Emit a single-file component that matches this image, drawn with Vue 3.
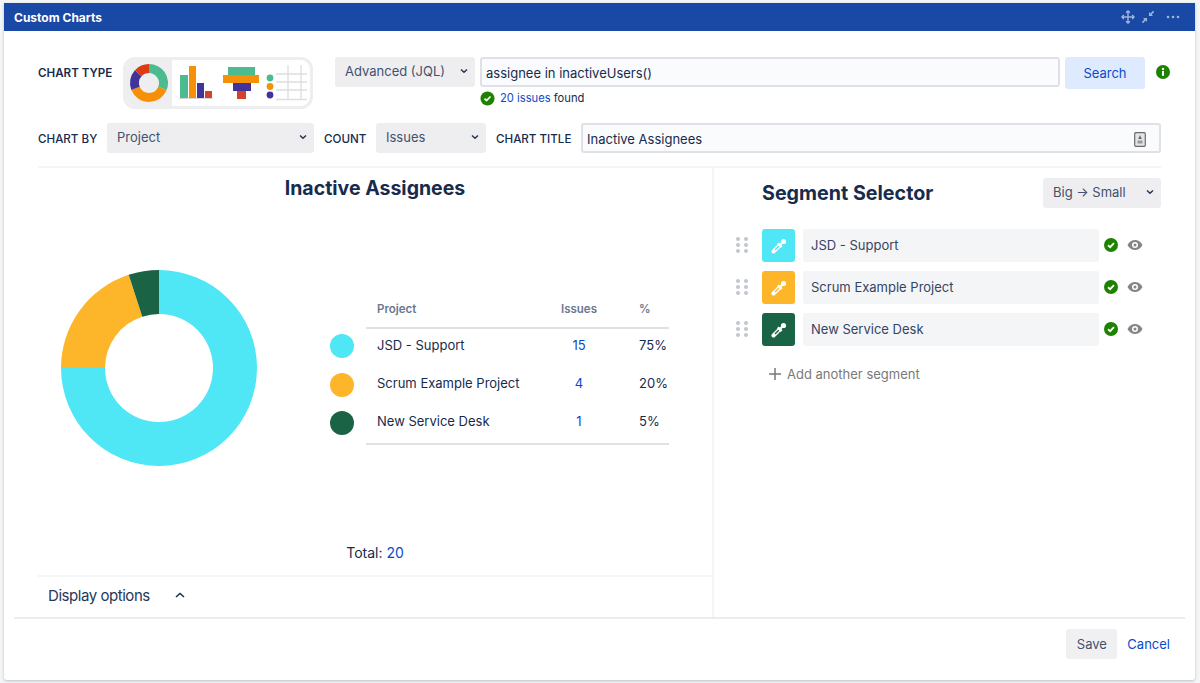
<script setup>
const chartTypes = [
  { id: 'donut', box: '126 60 46 46', active: true },
  { id: 'bars', box: '172 60 46 46' },
  { id: 'funnel', box: '218 60 46 46' },
  { id: 'table', box: '264 60 46 46' }
]

const segments = [
  { name: 'JSD - Support', color: '#4fe6f5', issues: 15, pct: '75%' },
  { name: 'Scrum Example Project', color: '#fdb52a', issues: 4, pct: '20%' },
  { name: 'New Service Desk', color: '#1b6345', issues: 1, pct: '5%' }
]

// donut slices, clockwise from 12 o'clock
function slice(cx, cy, r, r2, from, to) {
  const pt = (rad, a) => {
    const t = ((a - 90) * Math.PI) / 180
    return `${(cx + rad * Math.cos(t)).toFixed(2)} ${(cy + rad * Math.sin(t)).toFixed(2)}`
  }
  const big = to - from > 180 ? 1 : 0
  return `M${pt(r, from)} A${r} ${r} 0 ${big} 1 ${pt(r, to)} L${pt(r2, to)} A${r2} ${r2} 0 ${big} 0 ${pt(r2, from)} Z`
}

const donut = []
let start = 0
for (const s of segments) {
  const end = start + (s.issues / 20) * 360
  donut.push({ color: s.color, d: slice(98, 98, 98, 54, start, end) })
  start = end
}

const miniDonut = [
  { color: '#4cbb8f', d: slice(149, 83, 19, 10, 0, 112) },
  { color: '#f79009', d: slice(149, 83, 19, 10, 112, 248) },
  { color: '#41339a', d: slice(149, 83, 19, 10, 248, 312) },
  { color: '#dc3a14', d: slice(149, 83, 19, 10, 312, 360) }
]
</script>

<template>
  <div class="page">
    <div class="card">
      <div class="titlebar">
        <span class="titlebar-name">Custom Charts</span>
        <div class="titlebar-icons">
          <svg width="14" height="14" viewBox="0 0 16 16" fill="none" stroke="#9fb3dc" stroke-width="1.600">
            <path d="M8 1v14M1 8h14M5.800 3.200 8 1l2.200 2.200M5.800 12.800 8 15l2.200-2.200M3.200 5.800 1 8l2.200 2.200M12.800 5.800 15 8l-2.200 2.200" />
          </svg>
          <svg width="14" height="14" viewBox="0 0 14 14" fill="#9fb3dc">
            <path d="M8 6V2l1.400 1.400L12 .8l1.200 1.200-2.600 2.600L12 6zM6 8v4l-1.400-1.400L2 13.200.8 12l2.600-2.600L2 8z" />
          </svg>
          <svg class="dots" width="14" height="4" viewBox="0 0 14 4" fill="#9fb3dc">
            <circle cx="2" cy="2" r="1.300" />
            <circle cx="7" cy="2" r="1.300" />
            <circle cx="12" cy="2" r="1.300" />
          </svg>
        </div>
      </div>

      <div class="controls">
        <div class="row row-top">
          <span class="label label-type">CHART TYPE</span>
          <div class="type-picker">
            <svg
              v-for="t in chartTypes"
              :key="t.id"
              :class="['type-btn', { active: t.active }]"
              width="46"
              height="46"
              :viewBox="t.box"
            >
              <template v-if="t.id === 'donut'">
                <path v-for="p in miniDonut" :key="p.color" :d="p.d" :fill="p.color" />
              </template>
              <template v-else-if="t.id === 'bars'">
                <rect x="180" y="75" width="8" height="23" fill="#4cbb8f" />
                <rect x="189" y="66" width="7" height="32" fill="#f79009" />
                <rect x="197" y="83" width="7" height="15" fill="#41339a" />
                <rect x="205" y="91" width="7" height="7" fill="#d1442a" />
                <rect x="179" y="98" width="34" height="1" fill="#d5d5da" />
              </template>
              <template v-else-if="t.id === 'funnel'">
                <rect x="228" y="67" width="27" height="8" fill="#4cbb8f" />
                <rect x="223" y="75" width="36" height="8" fill="#f79009" />
                <rect x="233" y="83" width="18" height="8" fill="#41339a" />
                <rect x="237" y="91" width="9" height="8" fill="#d1442a" />
              </template>
              <template v-else>
                <path d="M276 74h31M276 82h31M276 90h31M276 99.500h31M288 65v35M301 65v35" stroke="#dedede" stroke-width="1.300" fill="none" />
                <circle cx="270" cy="78" r="3.400" fill="#4cbb8f" />
                <circle cx="270" cy="86.500" r="3.400" fill="#f79009" />
                <circle cx="270" cy="95" r="3.400" fill="#41339a" />
              </template>
            </svg>
          </div>
          <div class="select select-jql">
            <span>Advanced (JQL)</span>
            <svg class="chev" width="8" height="6" viewBox="0 0 8 6"><path d="M1 1.500 4 4.300 7 1.500" /></svg>
          </div>
          <div class="query">
            <div class="field field-query">assignee in inactiveUsers()</div>
            <div class="found">
              <svg width="15" height="15" viewBox="0 0 16 16">
                <circle cx="8" cy="8" r="7.500" fill="#1d8102" />
                <path d="M4.800 8.200 7 10.300l4.200-4.400" fill="none" stroke="#fff" stroke-width="1.800" />
              </svg>
              <span><a class="link">20 issues</a> found</span>
            </div>
          </div>
          <button class="btn-search">Search</button>
          <svg class="info" width="14" height="14" viewBox="0 0 14 14">
            <circle cx="7" cy="7" r="7" fill="#1d8102" />
            <rect x="6" y="6" width="2" height="4.800" fill="#fff" />
            <circle cx="7" cy="4" r="1.200" fill="#fff" />
          </svg>
        </div>

        <div class="row row-second">
          <span class="label label-by">CHART BY</span>
          <div class="select select-by">
            <span>Project</span>
            <svg class="chev" width="8" height="6" viewBox="0 0 8 6"><path d="M1 1.500 4 4.300 7 1.500" /></svg>
          </div>
          <span class="label label-count">COUNT</span>
          <div class="select select-count">
            <span>Issues</span>
            <svg class="chev" width="8" height="6" viewBox="0 0 8 6"><path d="M1 1.500 4 4.300 7 1.500" /></svg>
          </div>
          <span class="label label-title">CHART TITLE</span>
          <div class="field field-title">
            <span>Inactive Assignees</span>
            <svg width="12" height="15" viewBox="0 0 12 15">
              <rect x="0.700" y="0.700" width="10.600" height="13.600" rx="1" fill="#e4e4e4" stroke="#6b6b6b" stroke-width="1.200" />
              <path d="M6 3 7.800 7H4.200z" fill="#6b6b6b" />
              <rect x="3.500" y="8.500" width="5" height="3" fill="#9a9a9a" />
            </svg>
          </div>
        </div>
      </div>

      <div class="body">
        <section class="left">
          <h2 class="chart-title">Inactive Assignees</h2>
          <div class="chart">
            <svg class="pie" width="196" height="196" viewBox="0 0 196 196">
              <path v-for="p in donut" :key="p.color" :d="p.d" :fill="p.color" />
            </svg>
            <table class="legend">
              <thead>
                <tr>
                  <th class="col-dot"></th>
                  <th class="col-name">Project</th>
                  <th class="col-num">Issues</th>
                  <th class="col-pct">%</th>
                </tr>
              </thead>
              <tbody>
                <tr v-for="s in segments" :key="s.name">
                  <td class="col-dot"><span class="dot" :style="{ background: s.color }"></span></td>
                  <td class="col-name">{{ s.name }}</td>
                  <td class="col-num"><a class="link">{{ s.issues }}</a></td>
                  <td class="col-pct">{{ s.pct }}</td>
                </tr>
              </tbody>
            </table>
          </div>
          <div class="total">Total: <a class="link">20</a></div>
          <div class="display">
            <span>Display options</span>
            <svg width="10" height="6" viewBox="0 0 10 6" fill="none" stroke="#172b4d" stroke-width="1.500">
              <path d="M1 5 5 1.500 9 5" />
            </svg>
          </div>
        </section>

        <section class="right">
          <div class="right-head">
            <h2 class="right-title">Segment Selector</h2>
            <div class="select select-order">
              <span>Big → Small</span>
              <svg class="chev" width="8" height="6" viewBox="0 0 8 6"><path d="M1 1.500 4 4.300 7 1.500" /></svg>
            </div>
          </div>
          <div class="seg-list">
            <div v-for="s in segments" :key="s.name" class="seg">
              <svg class="grip" width="12" height="16" viewBox="0 0 12 16" fill="#c1c7d0">
                <circle cx="2" cy="2" r="2" />
                <circle cx="10" cy="2" r="2" />
                <circle cx="2" cy="8" r="2" />
                <circle cx="10" cy="8" r="2" />
                <circle cx="2" cy="14" r="2" />
                <circle cx="10" cy="14" r="2" />
              </svg>
              <div class="swatch" :style="{ background: s.color, color: s.color }">
                <svg width="16" height="16" viewBox="0 0 16 16">
                  <path d="M2.500 13.500 8.500 7.500" stroke="#fff" stroke-width="4" stroke-linecap="round" />
                  <path d="M4 12 8 8" stroke="currentColor" stroke-width="1.500" />
                  <path d="M6.800 5.400 10.600 9.200M9.500 6.500l3-3" stroke="#fff" stroke-width="2.400" />
                  <circle cx="12.500" cy="3.500" r="2.600" fill="#fff" />
                </svg>
              </div>
              <div class="seg-name">{{ s.name }}</div>
              <svg class="seg-check" width="14" height="14" viewBox="0 0 16 16">
                <circle cx="8" cy="8" r="8" fill="#1d8102" />
                <path d="M4.600 8.300 7 10.500l4.400-4.600" fill="none" stroke="#fff" stroke-width="2" />
              </svg>
              <svg class="seg-eye" width="16" height="12" viewBox="0 0 16 12">
                <path d="M0.500 6C2.300 2.500 5 1 8 1s5.700 1.500 7.500 5c-1.800 3.500-4.500 5-7.500 5S2.300 9.500.5 6z" fill="#858585" />
                <circle cx="8" cy="6" r="3" fill="#fff" />
                <circle cx="8" cy="6" r="1.500" fill="#858585" />
              </svg>
            </div>
          </div>
          <div class="add-seg">
            <svg width="12" height="12" viewBox="0 0 12 12" stroke="#7a7a7a" stroke-width="1.500"><path d="M6 0v12M0 6h12" /></svg>
            <span>Add another segment</span>
          </div>
        </section>
      </div>

      <div class="footer">
        <button class="btn-save">Save</button>
        <a class="link cancel">Cancel</a>
      </div>
    </div>
  </div>
</template>

<style>
html,
body {
  margin: 0;
  background: #f4f5f7;
}
</style>

<style scoped>
.page {
  height: 683px;
  box-sizing: border-box;
  padding: 3px 5px 3px 4px;
  font-family: Inter, "Liberation Sans", sans-serif;
  font-size: 13px;
  color: #172b4d;
}

.card {
  height: 677px;
  background: #fff;
  border-radius: 0 0 3px 3px;
  box-shadow: 0 1px 3px rgba(9, 30, 66, 0.25);
  display: flex;
  flex-direction: column;
  overflow: hidden;
}

.titlebar {
  height: 28px;
  flex: none;
  background: #1a48a5;
  display: flex;
  align-items: center;
  justify-content: space-between;
  padding: 0 15px 0 10px;
}

.titlebar-name {
  color: #fff;
  font-size: 12px;
  font-weight: 700;
}

.titlebar-icons {
  display: flex;
  align-items: center;
  gap: 6px;
}

.dots {
  margin-left: 5px;
}

.controls {
  padding: 26px 34px 0;
}

.row {
  display: flex;
}

.row-top {
  align-items: flex-start;
  height: 52px;
}

.row-second {
  align-items: center;
  height: 30px;
  margin-top: 14px;
}

.label {
  flex: none;
  font-size: 11.600px;
  font-weight: 500;
  white-space: nowrap;
}

.row-second .label {
  margin-top: 2px;
}

.label-type {
  font-weight: 600;
  width: 85px;
  margin-top: 9px;
}

.label-by {
  width: 59px;
}

.label-count {
  width: 42px;
  margin-left: 10px;
}

.label-title {
  width: 75px;
  margin-left: 10px;
}

.type-picker {
  width: 190px;
  height: 52px;
  box-sizing: border-box;
  flex: none;
  display: flex;
  border: 3px solid #eeeef0;
  border-radius: 12px;
  background: #fff;
  overflow: hidden;
}

.type-btn {
  display: block;
  flex: none;
}

.type-btn.active {
  background: #eeeef0;
}

.select {
  height: 30px;
  box-sizing: border-box;
  flex: none;
  display: flex;
  align-items: center;
  justify-content: space-between;
  background: #eeeef0;
  border-radius: 3px;
  padding: 0 7px 2px 10px;
  color: #42526e;
  white-space: nowrap;
}

.chev {
  fill: none;
  stroke: #253858;
  stroke-width: 1.500;
}

.select-jql {
  width: 140px;
  margin-left: 22px;
}

.select-by {
  width: 207px;
  margin-left: 10px;
}

.select-count {
  width: 110px;
  margin-left: 10px;
}

.select-order {
  width: 118px;
}

.query {
  width: 580px;
  margin-left: 5px;
  flex: none;
}

.field {
  height: 30px;
  box-sizing: border-box;
  border: 2px solid #dfe1e6;
  border-radius: 3px;
  background: #fafbfc;
  display: flex;
  align-items: center;
  padding: 2px 4px 0;
}

.found {
  display: flex;
  align-items: center;
  gap: 5px;
  height: 14px;
  margin-top: 4px;
  font-size: 11.200px;
}

.link {
  color: #0c49c9;
  text-decoration: none;
}

.btn-search {
  width: 80px;
  height: 32px;
  flex: none;
  margin-left: 5px;
  border: 0;
  border-radius: 3px;
  background: #deebff;
  color: #0c49c9;
  font: inherit;
}

.info {
  flex: none;
  margin: 8px 0 0 11px;
}

.field-title {
  width: 580px;
  flex: none;
  margin-left: 10px;
  justify-content: space-between;
  padding-right: 13px;
}

.body {
  flex: 1;
  min-height: 0;
  margin: 13px 34px 0;
  border-top: 2px solid #f4f5f7;
  display: flex;
}

.left {
  width: 676px;
  box-sizing: border-box;
  flex: none;
  border-right: 2px solid #f4f5f7;
  display: flex;
  flex-direction: column;
}

.chart-title {
  margin: 0;
  height: 32px;
  line-height: 40px;
  font-size: 19.500px;
  font-weight: 700;
  text-align: center;
}

.chart {
  height: 336px;
  flex: none;
  display: flex;
  align-items: center;
  padding-left: 23px;
}

.pie {
  display: block;
  flex: none;
}

.legend {
  margin-left: 73px;
  width: 339px;
  table-layout: fixed;
  border-collapse: collapse;
}

.legend th {
  height: 36px;
  padding: 0;
  font-size: 11.500px;
  font-weight: 600;
  color: #6b778c;
}

.legend th:not(.col-dot) {
  border-bottom: 2px solid #dfe1e6;
}

.legend td {
  height: 38.500px;
  box-sizing: border-box;
  padding: 0 0 6px;
}

.legend td.col-dot {
  padding-bottom: 3px;
}

.legend tbody tr:last-child td:not(.col-dot) {
  border-bottom: 2px solid #dfe1e6;
}

.col-dot {
  width: 36px;
}

.col-name {
  width: 162px;
  padding-left: 11px !important;
  text-align: left;
  white-space: nowrap;
}

.col-num {
  width: 80px;
  text-align: center;
}

.col-pct {
  width: 30px;
  padding-left: 20px !important;
  text-align: left;
}

.dot {
  display: block;
  width: 24px;
  height: 24px;
  border-radius: 50%;
}

.total {
  margin-top: 7px;
  height: 20px;
  line-height: 20px;
  font-size: 14px;
  text-align: center;
}

.display {
  flex: 1;
  margin-top: 12px;
  border-top: 2px solid #f4f5f7;
  display: flex;
  align-items: center;
  gap: 25px;
  padding: 0 0 4px 10px;
  font-size: 15px;
  letter-spacing: -0.450px;
  color: #253858;
}

.right {
  flex: 1;
  padding-left: 22px;
}

.right-head {
  display: flex;
  align-items: center;
  justify-content: space-between;
  margin: 10px 0 0 26px;
}

.right-title {
  margin: 0;
  font-size: 19.700px;
  font-weight: 700;
}

.seg-list {
  margin-top: 21px;
  display: flex;
  flex-direction: column;
  gap: 9px;
}

.seg {
  display: flex;
  align-items: center;
  height: 33px;
}

.grip {
  flex: none;
  margin: 0 14px 2px 0;
}

.swatch {
  width: 33px;
  height: 33px;
  flex: none;
  border-radius: 3px;
  display: flex;
  align-items: center;
  justify-content: center;
}

.seg-name {
  width: 296px;
  height: 33px;
  line-height: 32px;
  box-sizing: border-box;
  flex: none;
  margin-left: 8px;
  padding-left: 8px;
  background: #f4f5f7;
  border-radius: 3px;
  color: #344563;
}

.seg-check {
  flex: none;
  margin: 0 0 2px 5px;
}

.seg-eye {
  flex: none;
  margin: 0 0 2px 9px;
}

.add-seg {
  display: flex;
  align-items: center;
  gap: 6px;
  height: 20px;
  margin: 18px 0 0 33px;
  color: #7a7a7a;
}

.footer {
  height: 63px;
  flex: none;
  box-sizing: border-box;
  margin: 0 10px;
  border-top: 2px solid #ebecf0;
  display: flex;
  align-items: flex-start;
  justify-content: flex-end;
  padding: 10px 15px 0 0;
}

.btn-save {
  width: 51px;
  height: 30px;
  border: 0;
  border-radius: 3px;
  background: #f0f0f2;
  color: #42526e;
  font: inherit;
}

.cancel {
  margin-left: 10px;
  line-height: 30px;
}
</style>
